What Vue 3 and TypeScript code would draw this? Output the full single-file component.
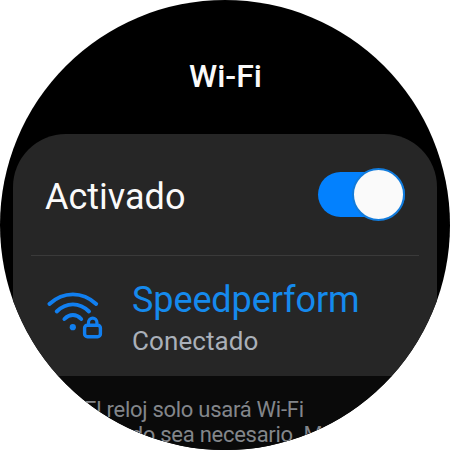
<script setup lang="ts">
import { ref } from 'vue'

const enabled = ref<boolean>(true)
const network = { name: 'Speedperform', status: 'Conectado' }
const notice: string[] = ['El reloj solo usará Wi-Fi', 'cuando sea necesario. Más']
</script>

<template>
  <main class="watch">
    <h1 class="title">Wi-Fi</h1>
    <section class="card">
      <div class="row toggle-row">
        <span class="label">Activado</span>
        <button
          class="switch"
          :class="{ on: enabled }"
          role="switch"
          :aria-checked="enabled"
          @click="enabled = !enabled"
        >
          <span class="knob"></span>
        </button>
      </div>
      <div class="divider"></div>
      <div class="row network">
        <svg class="wifi" viewBox="0 0 60 54" fill="none" stroke="currentColor" stroke-width="3.9" stroke-linecap="round" stroke-linejoin="round">
          <path d="M4.4 15C18.5 2.2 37.3 2.2 51.2 15" />
          <path d="M11.7 22.5C21.4 13 34.4 13 44 22.5" />
          <path d="M19.4 30C24.6 24.7 31.2 24.7 36.2 30" />
          <circle cx="27.8" cy="38.2" r="3.1" fill="currentColor" stroke="none" />
          <rect x="39.6" y="36.2" width="15.8" height="11.5" rx="2.8" stroke-width="3.4" />
          <path d="M43.5 36V33.3a4.2 4.2 0 0 1 8.4 0V36" stroke-width="3.2" />
        </svg>
        <div class="details">
          <span class="name">{{ network.name }}</span>
          <span class="status">{{ network.status }}</span>
        </div>
      </div>
    </section>
    <footer class="notice">
      <span v-for="line in notice" :key="line">{{ line }}</span>
    </footer>
  </main>
</template>

<style>
body {
  margin: 0;
  background: #fff;
}
</style>

<style scoped>
.watch {
  width: 450px;
  height: 450px;
  box-sizing: border-box;
  overflow: hidden;
  clip-path: circle(225px at 50% 50%);
  background: #000;
  color: #fafafa;
  font-family: Roboto, sans-serif;
}
.title {
  margin: 0;
  height: 134px;
  padding: 56px 0 0 1px;
  box-sizing: border-box;
  font-size: 32px;
  line-height: 40px;
  font-weight: 500;
  text-align: center;
}
.card {
  height: 242px;
  margin: 0 13px;
  border-radius: 53px 53px 0 0;
  background: #262626;
}
.row {
  display: flex;
  align-items: center;
}
.toggle-row {
  height: 121px;
  box-sizing: border-box;
  padding: 0 32px;
  justify-content: space-between;
}
.label {
  font-size: 36px;
  line-height: 44px;
  padding-top: 5px;
}
.switch {
  display: flex;
  align-items: center;
  justify-content: flex-start;
  width: 87px;
  height: 45px;
  padding: 0;
  border: 0;
  border-radius: 23px;
  background: #555;
}
.switch.on {
  justify-content: flex-end;
  background: #0381fe;
}
.knob {
  flex: none;
  box-sizing: border-box;
  width: 53px;
  height: 53px;
  border: 2px solid #777;
  border-radius: 50%;
  background: #fafafa;
}
.switch.on .knob {
  border-color: #117bdc;
}
.divider {
  height: 1px;
  margin: 0 18px;
  background: #3a3a3a;
}
.network {
  height: 120px;
  box-sizing: border-box;
  padding-left: 32px;
  gap: 27px;
}
.wifi {
  flex: none;
  width: 60px;
  height: 54px;
  color: #117ff0;
}
.details {
  display: flex;
  flex-direction: column;
  padding-top: 6px;
}
.name {
  color: #158aed;
  font-size: 36px;
  line-height: 44px;
  letter-spacing: -0.1px;
}
.status {
  color: #aab0b9;
  font-size: 26px;
  line-height: 38px;
  letter-spacing: 0.1px;
}
.notice {
  display: flex;
  flex-direction: column;
  height: 74px;
  padding: 21px 0 0 84px;
  box-sizing: border-box;
  background: #0a0a0a;
  color: #83868b;
  font-size: 22px;
  line-height: 25px;
  letter-spacing: -0.27px;
  white-space: nowrap;
}
</style>
